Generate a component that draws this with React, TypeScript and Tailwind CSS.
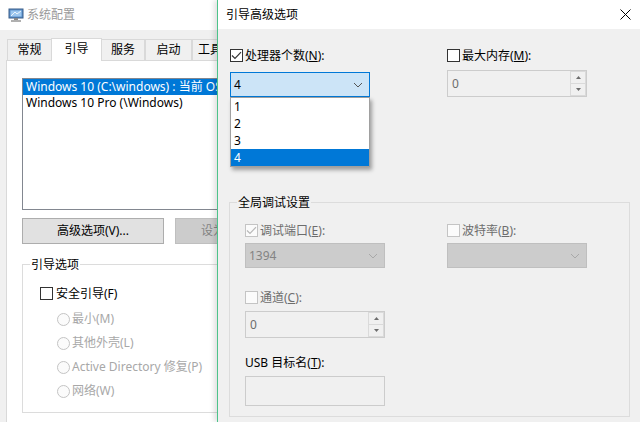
function CheckBox({ checked, disabled }: { checked?: boolean; disabled?: boolean }) {
  return (
    <span
      className={`flex h-[13px] w-[13px] shrink-0 items-center justify-center border ${
        disabled ? "border-[#c4c4c4] bg-[#fbfbfb]" : "border-[#333333] bg-white"
      }`}
    >
      {checked && (
        <svg width="11" height="9" viewBox="0 0 11 9">
          <path d="M1 4.5 L4 7.5 L10 1.2" fill="none" stroke={disabled ? "#b8b8b8" : "#333333"} strokeWidth="1.2" />
        </svg>
      )}
    </span>
  );
}

function Radio() {
  return <span className="h-[13px] w-[13px] shrink-0 rounded-full border border-[#c4c4c4] bg-[#fbfbfb]" />;
}

function Chevron({ color }: { color: string }) {
  return (
    <svg width="10" height="6" viewBox="0 0 10 6">
      <path d="M1 1 L5 5 L9 1" fill="none" stroke={color} strokeWidth="1" />
    </svg>
  );
}

function SpinBox() {
  return (
    <div className="flex h-[27px] w-[140px] border border-[#cccccc] bg-[#f0f0f0]">
      <span className="flex flex-1 items-center pl-[4px] text-[#6d6d6d]">0</span>
      <div className="flex w-[16px] flex-col">
        <span className="flex flex-1 items-center justify-center border border-[#dadada]">
          <svg width="5" height="3" viewBox="0 0 5 3">
            <path d="M0 3 L2.5 0 L5 3 Z" fill="#6d6d6d" />
          </svg>
        </span>
        <span className="flex flex-1 items-center justify-center border border-t-0 border-[#dadada]">
          <svg width="5" height="3" viewBox="0 0 5 3">
            <path d="M0 0 L2.5 3 L5 0 Z" fill="#6d6d6d" />
          </svg>
        </span>
      </div>
    </div>
  );
}

function Tab({ label, w, active }: { label: string; w: string; active?: boolean }) {
  if (active) {
    return (
      <div className={`relative z-10 -mx-[1px] -mb-[1px] flex h-[23px] items-start justify-center border border-b-0 border-[#d9d9d9] bg-white pt-[2px] ${w}`}>
        {label}
      </div>
    );
  }
  return (
    <div className={`flex h-[21px] items-center justify-center border border-b-0 border-[#d9d9d9] bg-[#f0f0f0] ${w}`}>
      {label}
    </div>
  );
}

export default function App() {
  return (
    <div className="relative h-[422px] w-[640px] overflow-hidden bg-[#f0f0f0] font-['Noto_Sans','Noto_Sans_CJK_SC',sans-serif] text-[12px] leading-[16px] text-black">
      {/* 系统配置 window, partly hidden */}
      <div className="absolute left-0 top-0 flex h-[422px] w-[320px] flex-col">
        <div className="flex h-[30px] shrink-0 items-center gap-[3px] bg-white pl-[8px]">
          <svg width="16" height="16" viewBox="0 0 16 16">
            <rect x="1" y="2" width="14" height="9" fill="#5b8fc9" stroke="#3a5f8a" />
            <rect x="2.5" y="3.5" width="11" height="6" fill="#9cc7ef" />
            <path d="M3 9 L7 5 L9 7 L13 4" fill="none" stroke="#ffffff" strokeWidth="0.8" />
            <rect x="6" y="11" width="4" height="2" fill="#8a8a8a" />
            <rect x="3" y="13" width="10" height="2" fill="#b0b0b0" />
          </svg>
          <span className="text-[#9a9a9a]">系统配置</span>
        </div>
        <div className="flex flex-1 flex-col pt-[8px]">
          <div className="flex h-[22px] items-end pl-[7px]">
            <Tab label="常规" w="w-[45px]" />
            <Tab label="引导" w="w-[51px]" active />
            <Tab label="服务" w="w-[44px]" />
            <Tab label="启动" w="w-[47px]" />
            <Tab label="工具" w="w-[36px]" />
          </div>
          <div className="ml-[6px] flex-1 border-l border-t border-[#d9d9d9] bg-white pl-[15px] pt-[17px]">
            <div className="h-[132px] w-[280px] border border-[#828790] bg-white">
              <div className="h-[16px] whitespace-nowrap bg-[#0078d7] pl-[3px] text-white">
                Windows 10 (C:\windows) : 当前 OS; 默认 OS
              </div>
              <div className="h-[16px] whitespace-nowrap pl-[3px]">Windows 10 Pro (\Windows)</div>
            </div>
            <div className="mt-[8px] flex gap-[11px]">
              <div className="flex h-[26px] w-[142px] items-center justify-center border border-[#adadad] bg-[#e1e1e1]">
                高级选项(V)...
              </div>
              <div className="flex h-[26px] w-[128px] items-center justify-center border border-[#bfbfbf] bg-[#cccccc] text-[#838383]">
                设为默认值(D)
              </div>
            </div>
            <div className="relative mt-[20px] w-[280px] border border-[#dcdcdc] pb-[9px] pl-[17px] pt-[22px]">
              <span className="absolute -top-[8px] left-[7px] bg-white px-[1px]">引导选项</span>
              <div className="flex h-[13px] items-center gap-[3px]">
                <CheckBox />
                <span>安全引导(F)</span>
              </div>
              <div className="mt-[7px] flex flex-col pl-[17px] text-[#a8a8a8]">
                <div className="flex h-[24px] items-center gap-[2px]">
                  <Radio />
                  <span>最小(M)</span>
                </div>
                <div className="flex h-[24px] items-center gap-[2px]">
                  <Radio />
                  <span>其他外壳(L)</span>
                </div>
                <div className="flex h-[24px] items-center gap-[2px]">
                  <Radio />
                  <span>Active Directory 修复(P)</span>
                </div>
                <div className="flex h-[24px] items-center gap-[2px]">
                  <Radio />
                  <span>网络(W)</span>
                </div>
              </div>
            </div>
          </div>
        </div>
      </div>

      {/* 引导高级选项 dialog */}
      <div className="absolute left-[217px] top-0 flex h-[422px] w-[423px] flex-col border-l border-[#4cc38a] shadow-[-3px_0_5px_rgba(0,0,0,0.12)]">
        <div className="flex h-[29px] shrink-0 items-center justify-between bg-white pl-[8px] pr-[9px]">
          <span>引导高级选项</span>
          <svg width="11" height="11" viewBox="0 0 11 11">
            <path d="M0.5 0.5 L10.5 10.5 M10.5 0.5 L0.5 10.5" stroke="#000000" strokeWidth="1" />
          </svg>
        </div>
        <div className="flex-1 bg-[#f0f0f0] px-[11px] pt-[20px]">
          <div className="flex gap-[77px] pl-[1px]">
            <div className="flex w-[140px] flex-col">
              <div className="flex h-[13px] items-center gap-[2px]">
                <CheckBox checked />
                <span>
                  处理器个数(<span className="underline">N</span>):
                </span>
              </div>
              <div className="relative mt-[10px]">
                <div className="flex h-[25px] items-center justify-between border border-[#0078d7] bg-[#cce4f7] pl-[3px] pr-[6px]">
                  <span>4</span>
                  <Chevron color="#555555" />
                </div>
                <div className="absolute left-0 top-full z-20 w-[140px] border border-[#a0a0a0] bg-white shadow-[2px_3px_4px_rgba(0,0,0,0.35)]">
                  <div className="flex h-[17px] items-center pl-[3px]">1</div>
                  <div className="flex h-[17px] items-center pl-[3px]">2</div>
                  <div className="flex h-[17px] items-center pl-[3px]">3</div>
                  <div className="flex h-[17px] items-center bg-[#0078d7] pl-[3px] text-white">4</div>
                </div>
              </div>
            </div>
            <div className="flex w-[140px] flex-col">
              <div className="flex h-[13px] items-center gap-[2px]">
                <CheckBox />
                <span>
                  最大内存(<span className="underline">M</span>):
                </span>
              </div>
              <div className="mt-[8px]">
                <SpinBox />
              </div>
            </div>
          </div>

          <div className="relative ml-0 mt-[105px] w-[401px] border border-[#dcdcdc] pb-[10px] pl-[15px] pt-[21px]">
            <span className="absolute -top-[8px] left-[7px] bg-[#f0f0f0] px-[1px]">全局调试设置</span>
            <div className="flex gap-[62px]">
              <div className="flex w-[140px] flex-col">
                <div className="flex h-[13px] items-center gap-[2px] text-[#6d6d6d]">
                  <CheckBox checked disabled />
                  <span>
                    调试端口(<span className="underline">E</span>):
                  </span>
                </div>
                <div className="mt-[6px] flex h-[25px] items-center justify-between border border-[#bfbfbf] bg-[#cccccc] pl-[3px] pr-[6px] text-[#838383]">
                  <span>1394</span>
                  <Chevron color="#a8a8a8" />
                </div>
                <div className="mt-[23px] flex h-[13px] items-center gap-[2px] text-[#6d6d6d]">
                  <CheckBox disabled />
                  <span>
                    通道(<span className="underline">C</span>):
                  </span>
                </div>
                <div className="mt-[7px]">
                  <SpinBox />
                </div>
                <div className="mt-[17px] h-[16px]">
                  USB 目标名(<span className="underline">T</span>):
                </div>
                <div className="mt-[5px] h-[30px] w-[140px] border border-[#cccccc] bg-[#f0f0f0]" />
              </div>
              <div className="flex w-[140px] flex-col">
                <div className="flex h-[13px] items-center gap-[2px] text-[#6d6d6d]">
                  <CheckBox disabled />
                  <span>
                    波特率(<span className="underline">B</span>):
                  </span>
                </div>
                <div className="mt-[6px] flex h-[25px] items-center justify-end border border-[#bfbfbf] bg-[#cccccc] pr-[6px]">
                  <Chevron color="#a8a8a8" />
                </div>
              </div>
            </div>
          </div>
        </div>
      </div>
    </div>
  );
}
